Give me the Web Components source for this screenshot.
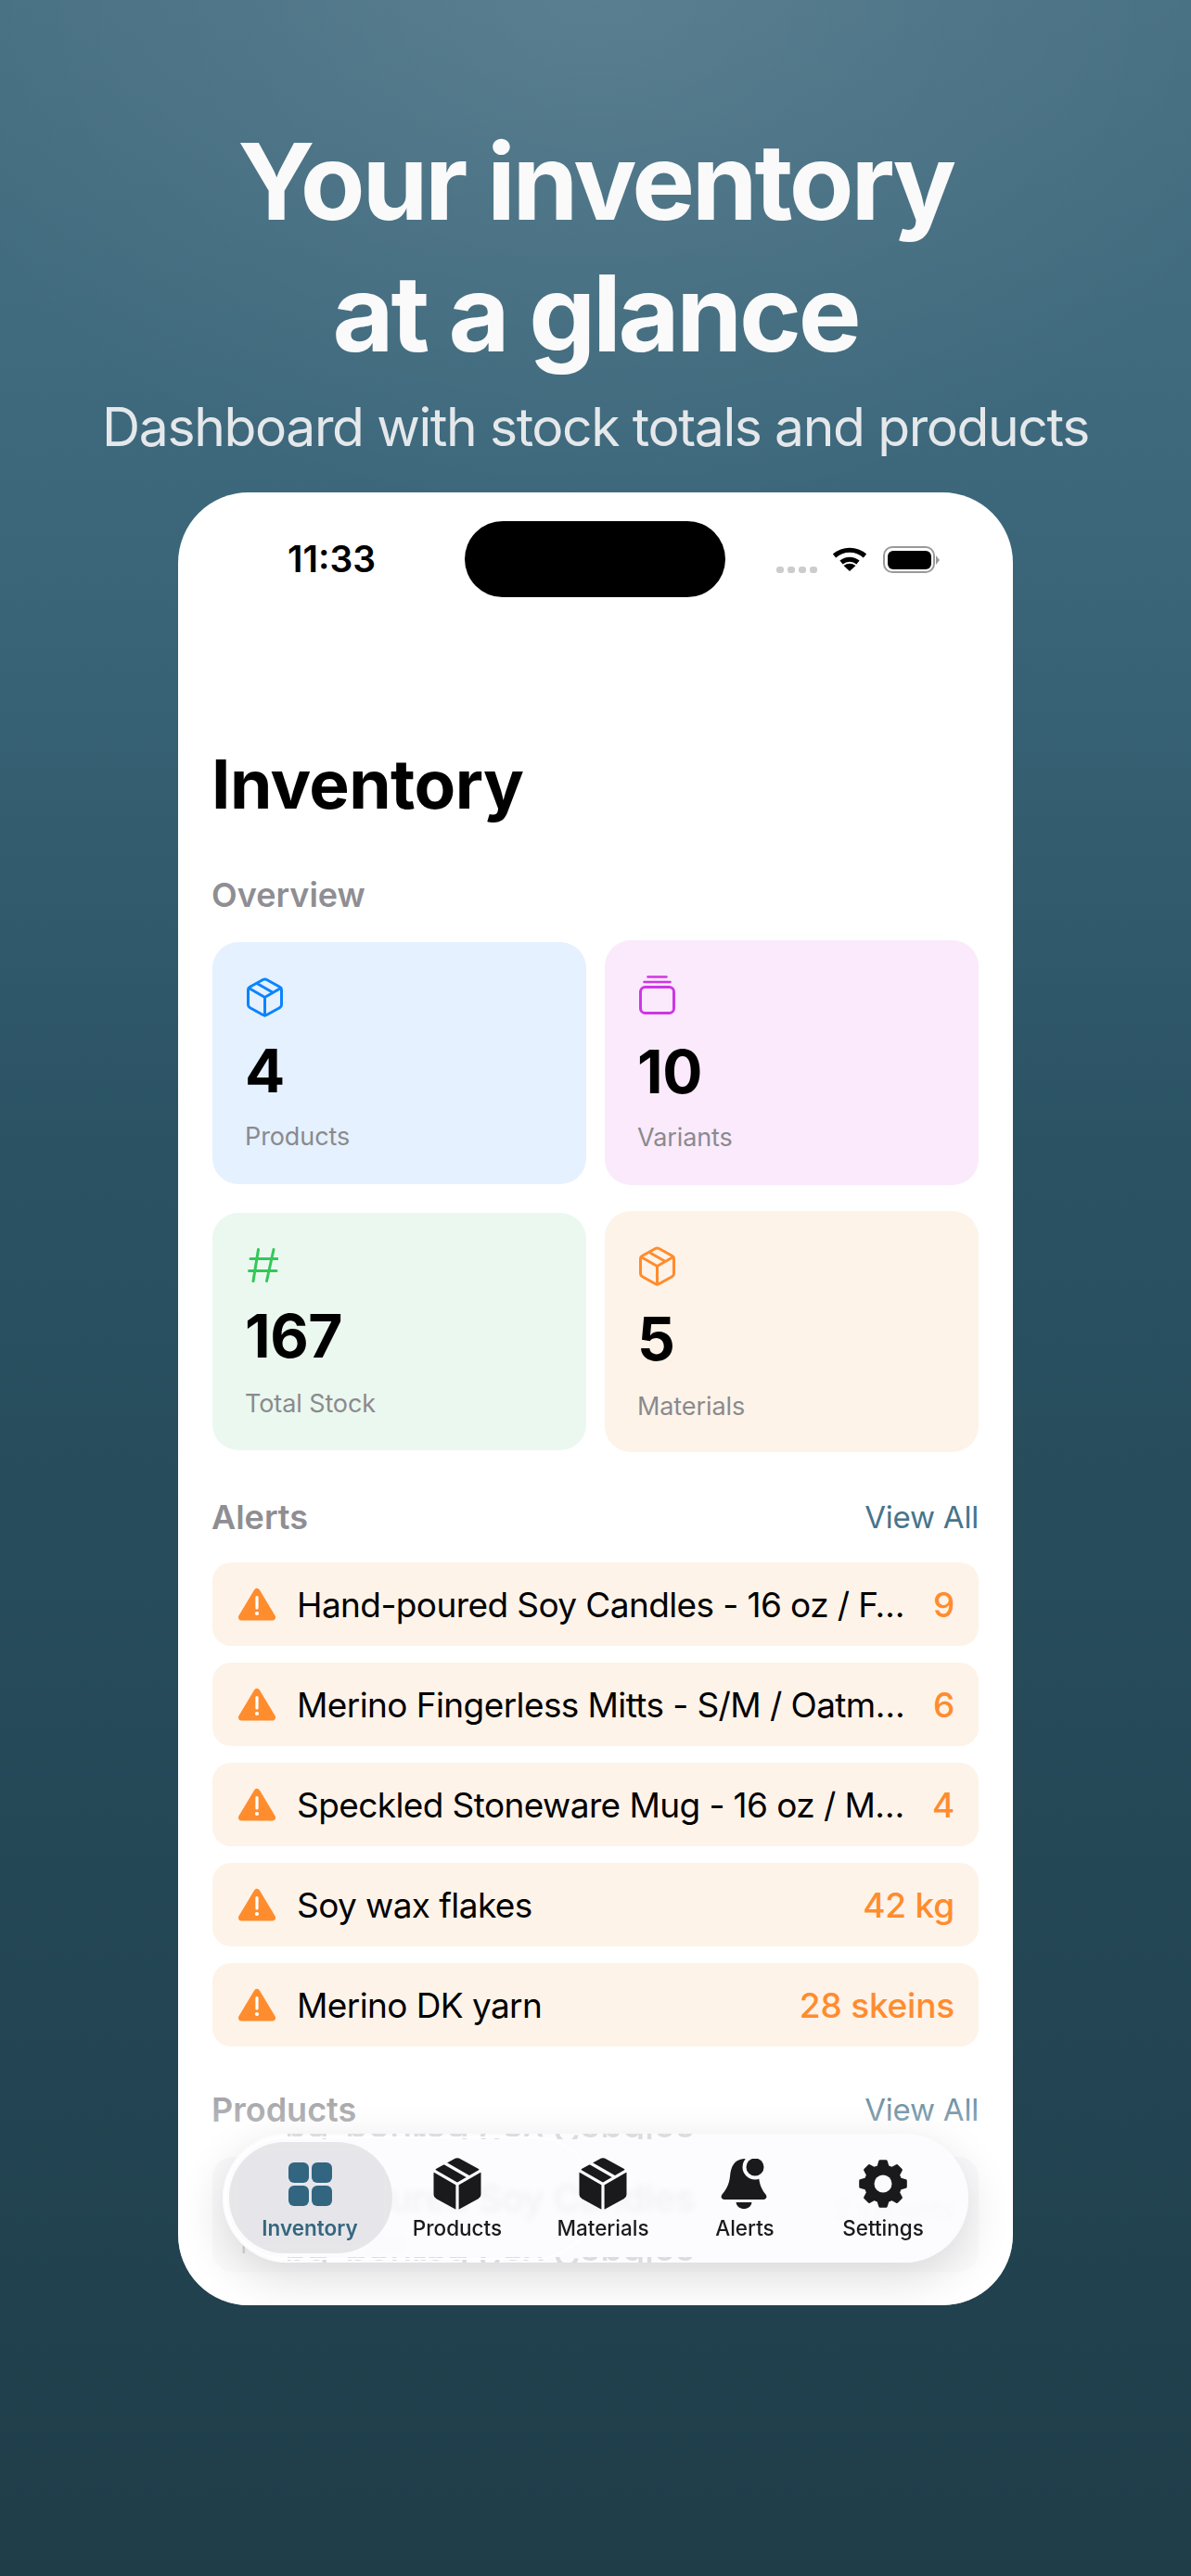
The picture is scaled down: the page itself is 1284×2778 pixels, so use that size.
<!DOCTYPE html>
<html>
<head>
<meta charset="utf-8">
<title>Inventory</title>
<style>
    html, body { margin: 0; padding: 0; }
    body { font-family: Inter, "Liberation Sans", sans-serif; width: 1284px; height: 2778px; overflow: hidden; }
</style>
</head>
<body>
<app-shot>
    <status-bar slot="phone"></status-bar>
    <inventory-screen slot="phone"></inventory-screen>
    <tab-bar slot="phone"></tab-bar>
</app-shot>

<script>
const ICONS = {
    box: `<svg width="39" height="43" viewBox="0 0 39 43" fill="none" stroke="currentColor" stroke-width="3" stroke-linejoin="round" stroke-linecap="round"><path d="M17.500 2.500 Q19.500 1.500 21.500 2.500 L35.500 10.300 Q37.500 11.500 37.500 13.500 V29.500 Q37.500 31.500 35.500 32.700 L21.500 40.500 Q19.500 41.500 17.500 40.500 L3.500 32.700 Q1.500 31.500 1.500 29.500 V13.500 Q1.500 11.500 3.500 10.300 Z"/><path d="M2.200 11.500 L19.500 21.500 L36.800 11.500 M19.500 21.500 V41 M11 6.500 L28 16.300"/></svg>`,
    stack: `<svg width="39" height="42" viewBox="0 0 39 42" fill="none" stroke="currentColor" stroke-linecap="round"><rect x="1.500" y="12.500" width="36" height="28" rx="5" stroke-width="3"/><path d="M5.500 7 H33.500 M9.500 1.500 H29.500" stroke-width="2.600"/></svg>`,
    hash: `<svg width="34" height="37" viewBox="0 0 34 37" fill="none" stroke="currentColor" stroke-width="3" stroke-linecap="round"><path d="M12.500 1.500 L7 35.500 M29 1.500 L21.500 35.500 M4 11.500 H33 M2.500 24.500 H32"/></svg>`,
    warn: `<svg width="40" height="36" viewBox="0 0 40 36"><path d="M20 4.500 L36.500 32 H3.500 Z" fill="#ff8c2d" stroke="#ff8c2d" stroke-width="7" stroke-linejoin="round"/><rect x="18.400" y="9" width="3.200" height="14.500" rx="1.600" fill="#fff"/><circle cx="20" cy="28" r="2.100" fill="#fff"/></svg>`,
    grid: `<svg width="47" height="47" viewBox="0 0 47 47" fill="#326580"><rect width="22" height="22" rx="6"/><rect x="25" width="22" height="22" rx="6"/><rect y="25" width="22" height="22" rx="6"/><rect x="25" y="25" width="22" height="22" rx="6"/></svg>`,
    boxFill: `<svg width="52" height="56" viewBox="0 0 52 56"><path d="M24.500 1.500 Q26 0.800 27.500 1.500 L48.500 13 Q50.500 14.200 50.500 16.500 V39.500 Q50.500 41.800 48.500 43 L27.500 54.500 Q26 55.200 24.500 54.500 L3.500 43 Q1.500 41.800 1.500 39.500 V16.500 Q1.500 14.200 3.500 13 Z" fill="#1a1a1c" stroke="#1a1a1c" stroke-width="2" stroke-linejoin="round"/><path d="M0 13.500 L26 28.500 L52 13.500 M26 28.500 V56 M12 5.500 L39 21" fill="none" stroke="#fbfbfd" stroke-width="3.200"/></svg>`,
    bell: `<svg width="52" height="54" viewBox="0 0 52 54" fill="#1a1a1c"><path d="M25 0 C14 1 11 9 10 19 C9 28 6 33 1.500 38.500 C-0.500 41.500 1 44 4 44 H46 C49 44 50.500 41.500 48.500 38.500 C44 33 42 28 41 20 C40 10 35 1 25 0 Z"/><circle cx="37" cy="9" r="13.500" fill="#fbfbfd"/><circle cx="37" cy="9" r="9.500"/><path d="M16.500 47 H33.500 C33 51.500 29 54 25 54 C21 54 17 51.500 16.500 47 Z"/></svg>`,
    wifi: `<svg width="38" height="27" viewBox="0 0 38 27" fill="none" stroke="#000"><path d="M2.500 10.500 A25 25 0 0 1 35.500 10.500" stroke-width="5"/><path d="M10 17.500 A14 14 0 0 1 28 17.500" stroke-width="5"/><path d="M12.500 21 Q19 16.500 25.500 21 L19 27 Z" fill="#000" stroke="none"/></svg>`
};

function gearIcon() {
    // 8 teeth, built from polar points
    const cx = 27, cy = 27, pts = [];
    for (let i = 0; i < 8; i++) {
        const a = i * Math.PI / 4 - Math.PI / 2;
        pts.push([a - 0.13, 24.5], [a + 0.13, 24.5], [a + 0.27, 19], [a + 0.785 - 0.27, 19]);
    }
    const d = pts.map(([a, r]) => `${(cx + r * Math.cos(a)).toFixed(1)} ${(cy + r * Math.sin(a)).toFixed(1)}`).join(' L');
    return `<svg width="54" height="54" viewBox="0 0 54 54"><path d="M${d} Z" fill="#1a1a1c" stroke="#1a1a1c" stroke-width="3" stroke-linejoin="round"/><circle cx="27" cy="27" r="9.500" fill="#fbfbfd"/></svg>`;
}

class AppShot extends HTMLElement {
    constructor() {
        super();
        this.attachShadow({ mode: 'open' }).innerHTML = `
            <style>
                :host {
                    display: flex; flex-direction: column; align-items: center;
                    width: 1284px; height: 2778px; box-sizing: border-box; padding-top: 125px;
                    background:
                        radial-gradient(ellipse 760px 560px at 50% 0, rgba(255,255,255,0.1), rgba(255,255,255,0) 100%),
                        linear-gradient(180deg, #477083 0%, #3c677b 20%, #2a5263 45%, #1f3d49 100%);
                    color: #fafafa;
                }
                h1 { margin: 0; font-size: 114px; line-height: 142px; font-weight: 700; letter-spacing: -3.3px; text-align: center; }
                p { margin: 20px 0 0; font-size: 57px; line-height: 64px; font-weight: 400; letter-spacing: -1.4px; color: #e5e8ea; }
                .phone {
                    position: relative; margin-top: 38px; width: 900px; height: 1955px; border-radius: 76px;
                    background: #fff; overflow: hidden; color: #000;
                }
            </style>
            <h1>Your inventory<br>at a glance</h1>
            <p>Dashboard with stock totals and products</p>
            <div class="phone"><slot name="phone"></slot></div>
        `;
    }
}

class StatusBar extends HTMLElement {
    constructor() {
        super();
        this.attachShadow({ mode: 'open' }).innerHTML = `
            <style>
                :host { display: flex; align-items: flex-start; height: 159px; box-sizing: border-box; padding-top: 31px; }
                .time { width: 309px; box-sizing: border-box; padding: 17px 0 0 118px; font-size: 39px; line-height: 48px; font-weight: 600; }
                .island { width: 281px; height: 82px; border-radius: 41px; background: #000; }
                .right { display: flex; align-items: flex-start; margin-left: 55px; padding-top: 27px; }
                .dots { display: flex; gap: 4px; margin: 22px 16px 0 0; }
                .dots i { width: 8px; height: 7px; border-radius: 3px; background: #ccc; }
                .batt { display: flex; align-items: center; margin-left: 17px; }
                .cell { width: 56px; height: 29px; box-sizing: border-box; border: 2.5px solid #999; border-radius: 10px; padding: 2.5px; }
                .cell i { display: block; height: 100%; border-radius: 6px; background: #000; }
                .nub { width: 0; height: 0; margin-left: 1px; border-left: 4px solid #999; border-top: 5px solid transparent; border-bottom: 5px solid transparent; }
            </style>
            <div class="time">11:33</div>
            <div class="island"></div>
            <div class="right">
                <div class="dots"><i></i><i></i><i></i><i></i></div>
                ${ICONS.wifi}
                <div class="batt"><div class="cell"><i></i></div><div class="nub"></div></div>
            </div>
        `;
    }
}

class StatCard extends HTMLElement {
    constructor() {
        super();
        const icon = this.getAttribute('icon');
        this.attachShadow({ mode: 'open' }).innerHTML = `
            <style>
                :host {
                    display: flex; flex-direction: column; box-sizing: border-box; padding: 38px 35px 0;
                    border-radius: 28px; height: var(--h, 261px); background: var(--bg);
                }
                .ic { height: var(--ih, 41px); margin-left: 2px; color: var(--fg); display: flex; align-items: flex-start; }
                .num { margin-top: 28px; font-size: 64px; line-height: 64px; font-weight: 700; letter-spacing: -0.4px; color: #000; }
                .lbl { margin-top: var(--lm, 23px); font-size: 27px; line-height: 32px; letter-spacing: -0.1px; color: #8a8a8e; }
            </style>
            <div class="ic">${ICONS[icon]}</div>
            <div class="num"><slot name="num"></slot></div>
            <div class="lbl"><slot></slot></div>
        `;
    }
}

class AlertRow extends HTMLElement {
    constructor() {
        super();
        this.attachShadow({ mode: 'open' }).innerHTML = `
            <style>
                :host {
                    display: flex; align-items: center; height: 90px; box-sizing: border-box; padding: 0 26px 0 28px;
                    border-radius: 20px; background: #fef3e9; font-size: 37px;
                }
                .ic { display: flex; width: 63px; flex: none; }
                .txt { flex: 1; white-space: nowrap; overflow: hidden; color: #000; letter-spacing: -0.6px; }
                .val { color: #ff8c2d; font-weight: 500; white-space: nowrap; letter-spacing: -0.2px; }
            </style>
            <div class="ic">${ICONS.warn}</div>
            <div class="txt"><slot></slot></div>
            <div class="val"><slot name="val"></slot></div>
        `;
    }
}

class SectionHead extends HTMLElement {
    constructor() {
        super();
        const more = this.getAttribute('more');
        this.attachShadow({ mode: 'open' }).innerHTML = `
            <style>
                :host { display: flex; justify-content: space-between; align-items: center; height: 46px; }
                .t { font-size: 36px; font-weight: 600; color: #8e8e93; margin-left: -1px; }
                .m { font-size: 33px; color: #47748c; letter-spacing: -0.2px; }
            </style>
            <div class="t"><slot></slot></div>
            ${more ? `<div class="m">${more}</div>` : ''}
        `;
    }
}

class InventoryScreen extends HTMLElement {
    constructor() {
        super();
        this.attachShadow({ mode: 'open' }).innerHTML = `
            <style>
                :host { display: block; padding: 0 37px; }
                h2 { margin: 0 0 0 -1px; padding-top: 112px; font-size: 73px; line-height: 88px; font-weight: 700; letter-spacing: -0.6px; }
                .overview { margin-top: 52px; }
                .grid { display: grid; grid-template-columns: 403px 403px; column-gap: 20px; row-gap: 28px; align-items: center; margin-top: 26px; }
                .blue { --bg: #e5f1fe; --fg: #0a84ff; }
                .pink { --bg: #faeafc; --fg: #cf35e6; --ih: 44px; --h: 264px; }
                .green { --bg: #ebf8ef; --fg: #34c759; --ih: 35px; --h: 256px; --lm: 25px; }
                .orange { --bg: #fef3e9; --fg: #ff8c2d; --ih: 40px; --h: 260px; --lm: 25px; }
                .alerts { margin-top: 47px; }
                .rows { display: flex; flex-direction: column; gap: 18px; margin-top: 26px; }
                .products { margin-top: 45px; }
                .prod {
                    display: grid; grid-template-columns: 1fr auto; align-content: start; margin-top: 28px; height: 124px; box-sizing: border-box;
                    padding: 21px 26px 0 26px; border-radius: 22px; background: #f5f5f8;
                }
                .prod .name { font-size: 40px; line-height: 48px; font-weight: 500; letter-spacing: -0.5px; color: #000; }
                .prod .sub { font-size: 28px; line-height: 48px; padding-top: 12px; color: #8a8a8e; }
                .prod .meta { font-size: 24px; line-height: 30px; color: #8a8a8e; }
            </style>
            <h2>Inventory</h2>
            <section-head class="overview">Overview</section-head>
            <div class="grid">
                <stat-card class="blue" icon="box"><span slot="num">4</span>Products</stat-card>
                <stat-card class="pink" icon="stack"><span slot="num">10</span>Variants</stat-card>
                <stat-card class="green" icon="hash"><span slot="num">167</span>Total Stock</stat-card>
                <stat-card class="orange" icon="box"><span slot="num">5</span>Materials</stat-card>
            </div>
            <section-head class="alerts" more="View All">Alerts</section-head>
            <div class="rows">
                <alert-row>Hand-poured Soy Candles - 16 oz / F…<span slot="val">9</span></alert-row>
                <alert-row>Merino Fingerless Mitts - S/M / Oatm…<span slot="val">6</span></alert-row>
                <alert-row>Speckled Stoneware Mug - 16 oz / M…<span slot="val">4</span></alert-row>
                <alert-row>Soy wax flakes<span slot="val">42 kg</span></alert-row>
                <alert-row>Merino DK yarn<span slot="val">28 skeins</span></alert-row>
            </div>
            <section-head class="products" more="View All">Products</section-head>
            <div class="prod">
                <div class="name">Hand-poured Soy Candles</div>
                <div class="sub">2 variants</div>
                <div class="meta">Total stock: 300</div>
            </div>
        `;
    }
}

class TabBar extends HTMLElement {
    constructor() {
        super();
        const tabs = [
            ['Inventory', ICONS.grid, 160], ['Products', ICONS.boxFill, 158], ['Materials', ICONS.boxFill, 156],
            ['Alerts', ICONS.bell, 150], ['Settings', gearIcon(), 148]
        ];
        this.attachShadow({ mode: 'open' }).innerHTML = `
            <style>
                :host { position: absolute; left: 0; right: 0; bottom: 0; height: 300px; display: block; }
                .fade {
                    position: absolute; inset: 0;
                    background: linear-gradient(180deg, rgba(255,255,255,0) 40px, rgba(255,255,255,0.4) 110px, rgba(255,255,255,0.75) 100%);
                }
                .shadow {
                    position: absolute; left: 48px; top: 115px; width: 804px; height: 139px; border-radius: 70px;
                    box-shadow: 0 16px 50px rgba(0,0,0,0.14);
                }
                .bar {
                    position: absolute; left: 48px; top: 115px; width: 804px; height: 139px; box-sizing: border-box;
                    display: flex; padding-left: 14px; border-radius: 70px; overflow: hidden;
                    background: rgba(252,252,254,0.91);
                    backdrop-filter: blur(3px);
                }
                .ring {
                    position: absolute; left: 2px; top: 3px; width: 400px; height: 133px; box-sizing: border-box; border-radius: 66px;
                    border: 2px solid rgba(255,255,255,0.95); border-right: none;
                }
                .pill {
                    position: absolute; left: 7px; top: 9px; width: 176px; height: 120px; border-radius: 60px;
                    background: rgba(226,226,229,0.82); backdrop-filter: blur(8px);
                }
                .tab {
                    position: relative; display: flex; flex-direction: column; align-items: center; flex: none;
                    font-size: 22.5px; font-weight: 500; color: #1a1a1c;
                }
                .tab.on { color: #35677f; font-weight: 600; }
                .icon { height: 58px; margin-top: 25px; display: flex; align-items: center; justify-content: center; }
                .lbl { margin-top: 5px; line-height: 28px; }
                .mirror {
                    position: absolute; left: 15px; height: 6px; overflow: hidden; font-size: 40px; line-height: 20px; font-weight: 500;
                    letter-spacing: -0.5px; color: #dcdce0; white-space: nowrap; transform: scaleY(-1); clip-path: inset(0 0 0 55px);
                }
                .mirror.top { top: 0; }
                .mirror.bot { bottom: 0; }
            </style>
            <div class="fade"></div>
            <div class="shadow"></div>
            <div class="bar">
                <div class="mirror top" aria-hidden="true">Hand-poured Soy Candles</div>
                <div class="mirror bot" aria-hidden="true">Hand-poured Soy Candles</div>
                <div class="pill"></div>
                <div class="ring"></div>
                ${tabs.map(([name, icon, w], i) => `
                    <div class="tab ${i === 0 ? 'on' : ''}" style="width:${w}px">
                        <div class="icon">${icon}</div>
                        <div class="lbl">${name}</div>
                    </div>`).join('')}
            </div>
        `;
    }
}

customElements.define('app-shot', AppShot);
customElements.define('status-bar', StatusBar);
customElements.define('stat-card', StatCard);
customElements.define('alert-row', AlertRow);
customElements.define('section-head', SectionHead);
customElements.define('inventory-screen', InventoryScreen);
customElements.define('tab-bar', TabBar);
</script>
</body>
</html>
